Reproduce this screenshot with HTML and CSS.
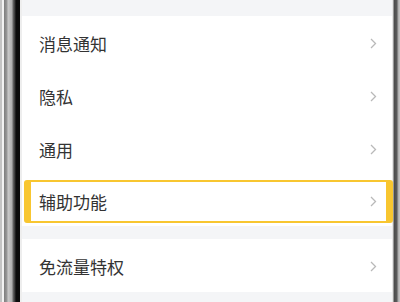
FILE: index.html
```html
<!DOCTYPE html>
<html lang="zh-CN">

<head>
  <meta charset="UTF-8">
  <meta name="viewport" content="width=device-width, initial-scale=1.0">
  <title>设置</title>
  <link rel="stylesheet" href="styles.css">
</head>

<body>
  <div class="phone">
    <div class="bezel-left"></div>
    <div class="screen">
      <div class="gap top"></div>
      <div class="group">
        <div class="row"><span>消息通知</span><svg class="arrow" viewBox="0 0 7 11"><path d="M1 1l4.5 4.5L1 10"/></svg></div>
        <div class="row"><span>隐私</span><svg class="arrow" viewBox="0 0 7 11"><path d="M1 1l4.5 4.5L1 10"/></svg></div>
        <div class="row"><span>通用</span><svg class="arrow" viewBox="0 0 7 11"><path d="M1 1l4.5 4.5L1 10"/></svg></div>
        <div class="row short"><span>辅助功能</span><svg class="arrow" viewBox="0 0 7 11"><path d="M1 1l4.5 4.5L1 10"/></svg>
          <div class="mark"></div>
        </div>
      </div>
      <div class="gap mid"></div>
      <div class="group">
        <div class="row"><span>免流量特权</span><svg class="arrow" viewBox="0 0 7 11"><path d="M1 1l4.5 4.5L1 10"/></svg></div>
      </div>
      <div class="gap bottom"></div>
    </div>
    <div class="bezel-right"></div>
  </div>
</body>

</html>
```

FILE: styles.css
```css
* {
  box-sizing: border-box;
}

body {
  margin: 0;
  width: 400px;
  height: 302px;
  overflow: hidden;
  font-family: "Noto Sans CJK SC", "Noto Sans", sans-serif;
  background: #fff;
}

.phone {
  display: flex;
  height: 302px;
}

.bezel-left {
  width: 22px;
  flex: none;
  background: linear-gradient(90deg,
    #c4c4c4 0, #c4c4c4 2px,
    #f2f2f2 2px, #f2f2f2 4px,
    #7d7d7d 4px, #9a9a9a 7px,
    #c9c9c9 8px, #b0b0b0 12px,
    #6a6a6a 13px, #333 15px,
    #0c0c0c 16px, #0c0c0c 20px,
    #eeeeee 20px);
}

.screen {
  flex: 1;
  display: flex;
  flex-direction: column;
  background: #f4f5f7;
}

.bezel-right {
  width: 8px;
  flex: none;
  background: linear-gradient(90deg,
    #e6e6e6 0, #e6e6e6 1px,
    #4a4a4a 2px, #5c5c5c 5px,
    #a8a8a8 6px, #c8c8c8 8px);
}

.gap.top {
  height: 16px;
}

.gap.mid {
  height: 13px;
}

.gap.bottom {
  flex: 1;
}

.group {
  background: #fff;
}

.row {
  position: relative;
  height: 53px;
  display: flex;
  align-items: center;
  justify-content: space-between;
  padding: 2px 15px 0 17px;
  font-size: 17px;
  color: #333;
}

.row.short {
  height: 51px;
  padding-top: 1px;
}

.arrow {
  width: 7px;
  height: 11px;
  fill: none;
  stroke: #b9b9b9;
  stroke-width: 1.3;
}

.mark {
  position: absolute;
  left: 2px;
  right: -1px;
  top: 5px;
  bottom: 3px;
  border: solid #f8c630;
  border-width: 2px 7px;
  border-radius: 3px;
}
```
